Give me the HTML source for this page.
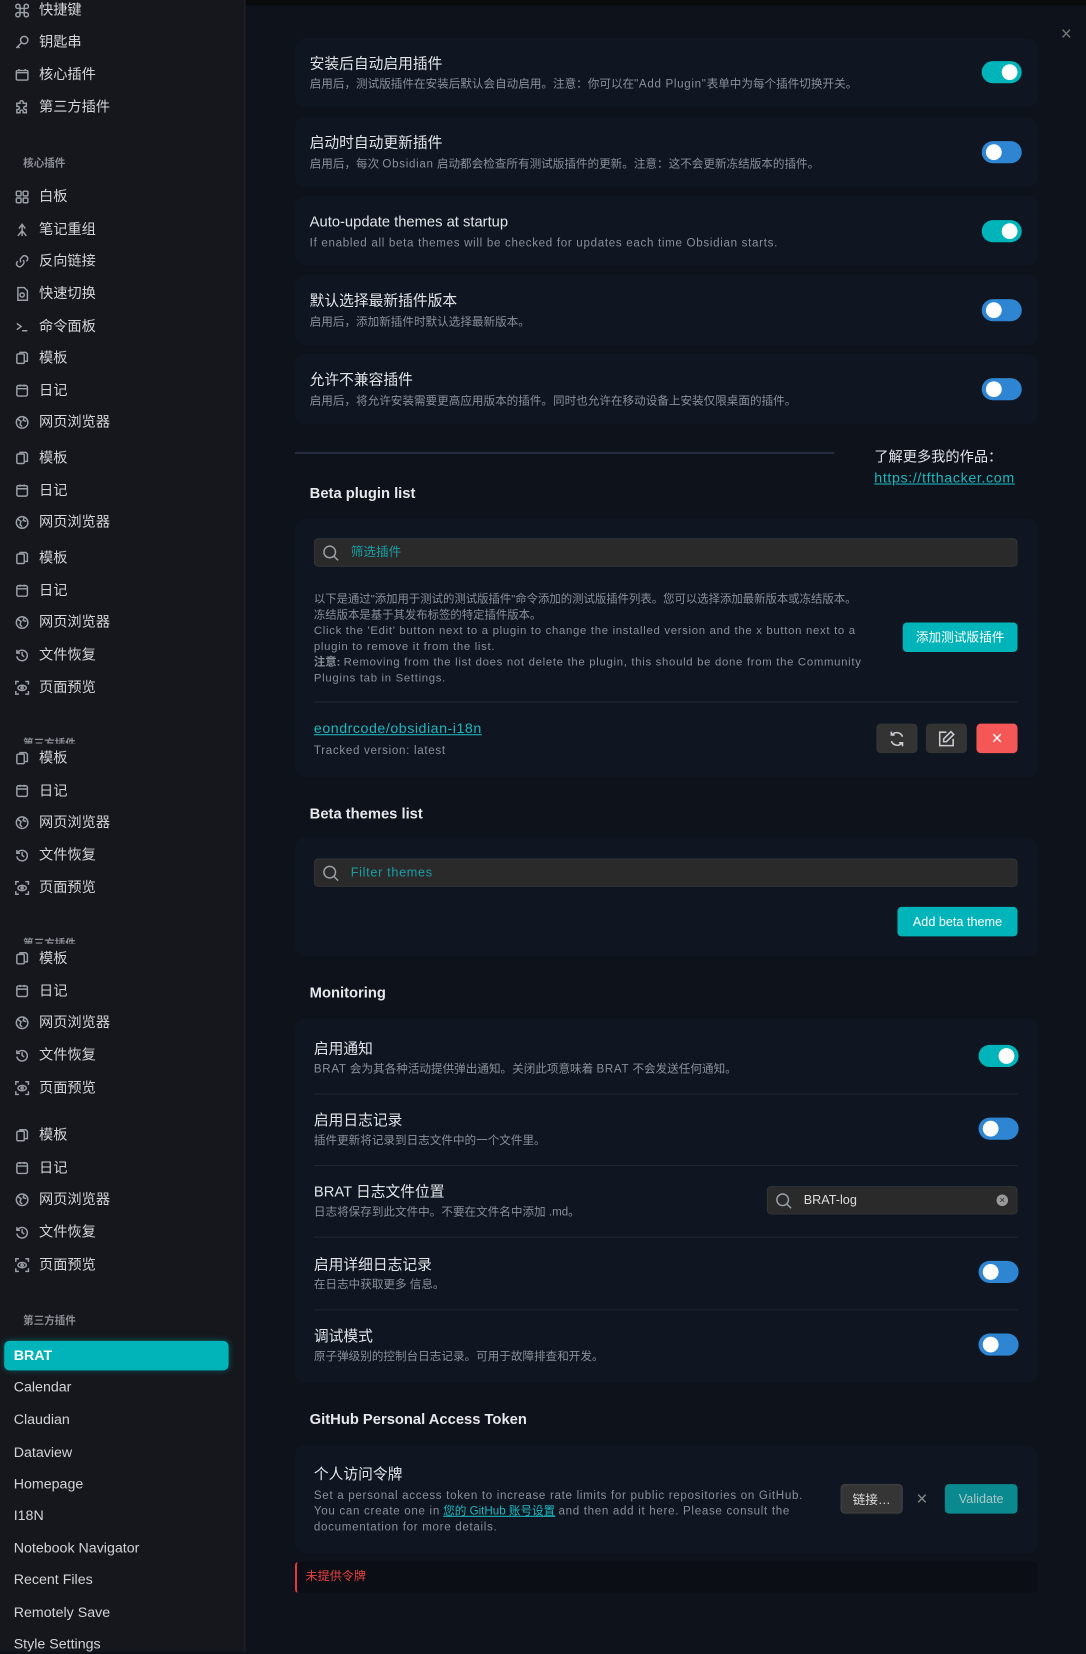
<!DOCTYPE html>
<html><head><meta charset="utf-8"><style>
*{box-sizing:border-box;margin:0;padding:0}
html,body{width:1086px;height:1651px;overflow:hidden;background:#0e121a;font-family:"Liberation Sans","Noto Sans CJK SC",sans-serif}
#w{position:absolute;left:0;top:0;width:1031px;height:1568px;transform:scale(1.05335);transform-origin:0 0;background:#0e121a}
.a{position:absolute}
#sb{position:absolute;left:0;top:0;width:233px;height:1568px;background:#15171c;border-right:1px solid #23262e}
.it{position:absolute;left:14px;height:18px;line-height:18px;font-size:13.5px;color:#d2d4d8;white-space:nowrap}
.it svg{position:absolute;left:0;top:2px;width:14px;height:14px;fill:none;stroke:#9aa0a8;stroke-width:1.4}
.it span{position:absolute;left:23px}
.pl{position:absolute;left:13px;height:18px;line-height:18px;font-size:13.5px;color:#d2d4d8}
.hd{position:absolute;left:22px;font-size:10px;font-weight:bold;color:#8b8f96;height:14px;line-height:14px}
.card{position:absolute;left:280px;width:705px;background:#0f1621;border-radius:10px}
.t{position:absolute;font-size:14px;color:#e2e4e8;white-space:nowrap;line-height:18px}
.d{position:absolute;font-size:11px;color:#8a9099;white-space:nowrap;line-height:15px}
.e{letter-spacing:0.65px}
.tg{position:absolute;width:38px;height:21px;border-radius:11px}
.tg i{position:absolute;top:3px;width:15px;height:15px;border-radius:50%;background:#fff}
.on{background:#00b4ba}.on i{right:4px}
.off{background:#2e86d2}.off i{left:4px}
.h{position:absolute;left:294px;font-size:14px;font-weight:bold;color:#e6e8ec;line-height:18px}
.inp{position:absolute;background:#2a2a2a;border-radius:4px;border:1px solid #333}
.sep{position:absolute;left:298px;width:668px;height:1px;background:#1f2733}
.btn{position:absolute;border-radius:4px;font-size:12px;text-align:center;color:#fff}
</style></head><body><div id="w">
<div class="a" style="left:75px;top:0;width:956px;height:5px;background:#0a0b0d"></div>
<div id="sb">
<svg width="0" height="0" style="position:absolute"><defs>
<symbol id="i1" viewBox="0 0 14 14"><rect x="2" y="2" width="10" height="10" rx="1.5"/><path d="M2 5h10M5 1v2M9 1v2"/></symbol>
<symbol id="i2" viewBox="0 0 14 14"><rect x="2" y="3" width="7" height="9" rx="1"/><path d="M5 3V1.5h5.5L12 3v7h-3"/></symbol>
<symbol id="i3" viewBox="0 0 14 14"><circle cx="7" cy="7" r="5.5"/><path d="M3 4l3 2 -1 3 2 2M9 2l-1 3 3 1"/></symbol>
<symbol id="i4" viewBox="0 0 14 14"><path d="M2.5 5A5 5 0 1 1 2 8"/><path d="M2 2v3h3M7 4v3l2 1.5"/></symbol>
<symbol id="i5" viewBox="0 0 14 14"><path d="M1 4V1h3M10 1h3v3M13 10v3h-3M4 13H1v-3"/><ellipse cx="7" cy="7" rx="4" ry="2.5"/><circle cx="7" cy="7" r="1"/></symbol>
<symbol id="i6" viewBox="0 0 14 14"><rect x="1.5" y="1.5" width="4.5" height="4.5" rx="1"/><rect x="8" y="1.5" width="4.5" height="4.5" rx="1"/><rect x="1.5" y="8" width="4.5" height="4.5" rx="1"/><rect x="8" y="8" width="4.5" height="4.5" rx="1"/></symbol>
<symbol id="i7" viewBox="0 0 14 14"><path d="M7 13V3M4 6l3-4 3 4M7 8l-4 5M7 8l4 5"/></symbol>
<symbol id="i8" viewBox="0 0 14 14"><path d="M6 8a3 3 0 0 1 0-4l2-2a3 3 0 0 1 4 4l-1 1M8 6a3 3 0 0 1 0 4l-2 2a3 3 0 0 1-4-4l1-1"/></symbol>
<symbol id="i9" viewBox="0 0 14 14"><path d="M3 1h6l3 3v9H3z"/><circle cx="7" cy="8" r="2"/></symbol>
<symbol id="i10" viewBox="0 0 14 14"><path d="M2 4l4 3-4 3M7 11h5"/></symbol>
<symbol id="i11" viewBox="0 0 14 14"><path d="M5 5h4v4H5zM5 5V3a2 2 0 1 0-2 2h2M9 5V3a2 2 0 1 1 2 2H9M5 9v2a2 2 0 1 1-2-2h2M9 9v2a2 2 0 1 0 2-2H9"/></symbol>
<symbol id="i12" viewBox="0 0 14 14"><circle cx="9" cy="5" r="3.5"/><path d="M6.5 7.5L1.5 12.5M3 11l1.5 1.5"/></symbol>
<symbol id="i13" viewBox="0 0 14 14"><rect x="1.5" y="3" width="11" height="9" rx="1"/><path d="M1.5 5h11M4 3V1.5M10 3V1.5"/></symbol>
<symbol id="i14" viewBox="0 0 14 14"><path d="M5 2a1.5 1.5 0 0 1 3 0v1h3v3h-1a1.5 1.5 0 0 0 0 3h1v3H8v-1a1.5 1.5 0 0 0-3 0v1H2V9h1a1.5 1.5 0 0 0 0-3H2V3h3z"/></symbol>
</defs></svg>
<div class="it" style="top:1px"><svg><use href="#i11"/></svg><span>快捷键</span></div>
<div class="it" style="top:31px"><svg><use href="#i12"/></svg><span>钥匙串</span></div>
<div class="it" style="top:62px"><svg><use href="#i13"/></svg><span>核心插件</span></div>
<div class="it" style="top:93px"><svg><use href="#i14"/></svg><span>第三方插件</span></div>
<div class="hd" style="top:149px">核心插件</div>
<div class="it" style="top:178px"><svg><use href="#i6"/></svg><span>白板</span></div>
<div class="it" style="top:209px"><svg><use href="#i7"/></svg><span>笔记重组</span></div>
<div class="it" style="top:239px"><svg><use href="#i8"/></svg><span>反向链接</span></div>
<div class="it" style="top:270px"><svg><use href="#i9"/></svg><span>快速切换</span></div>
<div class="it" style="top:301px"><svg><use href="#i10"/></svg><span>命令面板</span></div>
<div class="it" style="top:331px"><svg><use href="#i2"/></svg><span>模板</span></div>
<div class="it" style="top:362px"><svg><use href="#i1"/></svg><span>日记</span></div>
<div class="it" style="top:392px"><svg><use href="#i3"/></svg><span>网页浏览器</span></div>
<div class="it" style="top:426px"><svg><use href="#i2"/></svg><span>模板</span></div>
<div class="it" style="top:457px"><svg><use href="#i1"/></svg><span>日记</span></div>
<div class="it" style="top:487px"><svg><use href="#i3"/></svg><span>网页浏览器</span></div>
<div class="it" style="top:521px"><svg><use href="#i2"/></svg><span>模板</span></div>
<div class="it" style="top:552px"><svg><use href="#i1"/></svg><span>日记</span></div>
<div class="it" style="top:582px"><svg><use href="#i3"/></svg><span>网页浏览器</span></div>
<div class="it" style="top:613px"><svg><use href="#i4"/></svg><span>文件恢复</span></div>
<div class="it" style="top:644px"><svg><use href="#i5"/></svg><span>页面预览</span></div>
<div class="hd" style="top:700px;height:6px;overflow:hidden">第三方插件</div>
<div class="it" style="top:711px"><svg><use href="#i2"/></svg><span>模板</span></div>
<div class="it" style="top:742px"><svg><use href="#i1"/></svg><span>日记</span></div>
<div class="it" style="top:772px"><svg><use href="#i3"/></svg><span>网页浏览器</span></div>
<div class="it" style="top:803px"><svg><use href="#i4"/></svg><span>文件恢复</span></div>
<div class="it" style="top:834px"><svg><use href="#i5"/></svg><span>页面预览</span></div>
<div class="hd" style="top:890px;height:6px;overflow:hidden">第三方插件</div>
<div class="it" style="top:901px"><svg><use href="#i2"/></svg><span>模板</span></div>
<div class="it" style="top:932px"><svg><use href="#i1"/></svg><span>日记</span></div>
<div class="it" style="top:962px"><svg><use href="#i3"/></svg><span>网页浏览器</span></div>
<div class="it" style="top:993px"><svg><use href="#i4"/></svg><span>文件恢复</span></div>
<div class="it" style="top:1024px"><svg><use href="#i5"/></svg><span>页面预览</span></div>
<div class="it" style="top:1069px"><svg><use href="#i2"/></svg><span>模板</span></div>
<div class="it" style="top:1100px"><svg><use href="#i1"/></svg><span>日记</span></div>
<div class="it" style="top:1130px"><svg><use href="#i3"/></svg><span>网页浏览器</span></div>
<div class="it" style="top:1161px"><svg><use href="#i4"/></svg><span>文件恢复</span></div>
<div class="it" style="top:1192px"><svg><use href="#i5"/></svg><span>页面预览</span></div>
<div class="hd" style="top:1248px">第三方插件</div>
<div class="a" style="left:4px;top:1273px;width:213px;height:28px;background:#00b4ba;border-radius:5px;box-shadow:0 0 6px rgba(0,180,186,.4)"></div>
<div class="pl" style="top:1278px;color:#fff;font-weight:bold">BRAT</div>
<div class="pl" style="top:1308px">Calendar</div>
<div class="pl" style="top:1339px">Claudian</div>
<div class="pl" style="top:1370px">Dataview</div>
<div class="pl" style="top:1400px">Homepage</div>
<div class="pl" style="top:1430px">I18N</div>
<div class="pl" style="top:1461px">Notebook Navigator</div>
<div class="pl" style="top:1491px">Recent Files</div>
<div class="pl" style="top:1522px">Remotely Save</div>
<div class="pl" style="top:1552px">Style Settings</div>
</div>

<div class="a" style="left:1007px;top:24px;font-size:18px;color:#777;line-height:16px">×</div>

<div class="card" style="top:36px;height:66px"></div>
<div class="t" style="left:294px;top:51px">安装后自动启用插件</div>
<div class="d" style="left:294px;top:73px">启用后，测试版插件在安装后默认会自动启用。注意：你可以在<span class="e">"Add Plugin"</span>表单中为每个插件切换开关。</div>
<div class="tg on" style="left:932px;top:58px"><i></i></div>

<div class="card" style="top:111px;height:67px"></div>
<div class="t" style="left:294px;top:126px">启动时自动更新插件</div>
<div class="d" style="left:294px;top:149px">启用后，每次 <span class="e">Obsidian</span> 启动都会检查所有测试版插件的更新。注意：这不会更新冻结版本的插件。</div>
<div class="tg off" style="left:932px;top:134px"><i></i></div>

<div class="card" style="top:186px;height:66px"></div>
<div class="t" style="left:294px;top:201px">Auto-update themes at startup</div>
<div class="d e" style="left:294px;top:224px">If enabled all beta themes will be checked for updates each time Obsidian starts.</div>
<div class="tg on" style="left:932px;top:209px"><i></i></div>

<div class="card" style="top:261px;height:67px"></div>
<div class="t" style="left:294px;top:276px">默认选择最新插件版本</div>
<div class="d" style="left:294px;top:299px">启用后，添加新插件时默认选择最新版本。</div>
<div class="tg off" style="left:932px;top:284px"><i></i></div>

<div class="card" style="top:336px;height:67px"></div>
<div class="t" style="left:294px;top:351px">允许不兼容插件</div>
<div class="d" style="left:294px;top:374px">启用后，将允许安装需要更高应用版本的插件。同时也允许在移动设备上安装仅限桌面的插件。</div>
<div class="tg off" style="left:932px;top:359px"><i></i></div>

<div class="a" style="left:280px;top:429px;width:512px;height:2px;background:#272c40"></div>
<div class="t" style="left:830px;top:425px;font-size:13.5px">了解更多我的作品：</div>
<div class="t" style="left:830px;top:445px;font-size:13.5px;color:#1fb8c0;text-decoration:underline;letter-spacing:0.6px">https://tfthacker.com</div>

<div class="h" style="top:459px">Beta plugin list</div>
<div class="card" style="top:492px;height:246px"></div>
<div class="inp" style="left:298px;top:511px;width:668px;height:27px"></div>
<svg class="a" style="left:306px;top:517px" width="16" height="16" viewBox="0 0 16 16" fill="none" stroke="#9aa0a8" stroke-width="1.4"><circle cx="7" cy="7" r="5.5"/><path d="M11 11l4 4"/></svg>
<div class="d" style="left:333px;top:516px;font-size:12px;color:#1a9ea6;line-height:17px">筛选插件</div>
<div class="d" style="left:298px;top:562px;line-height:15px;font-size:10.8px">以下是通过"添加用于测试的测试版插件"命令添加的测试版插件列表。您可以选择添加最新版本或冻结版本。<br>冻结版本是基于其发布标签的特定插件版本。<br><span class="e">Click the 'Edit' button next to a plugin to change the installed version and the x button next to a</span><br><span class="e">plugin to remove it from the list.</span><br><b>注意:</b> <span class="e">Removing from the list does not delete the plugin, this should be done from the Community</span><br><span class="e">Plugins tab in Settings.</span></div>
<div class="btn" style="left:857px;top:591px;width:109px;height:28px;line-height:28px;background:#00b4ba">添加测试版插件</div>
<div class="sep" style="top:666px"></div>
<div class="t" style="left:298px;top:683px;font-size:13.5px;color:#1fb8c0;text-decoration:underline;letter-spacing:0.5px">eondrcode/obsidian-i18n</div>
<div class="d e" style="left:298px;top:706px">Tracked version: latest</div>
<div class="btn" style="left:832px;top:687px;width:39px;height:28px;background:#333"></div>
<svg class="a" style="left:843px;top:693px" width="17" height="17" viewBox="0 0 16 16" fill="none" stroke="#c8ccd2" stroke-width="1.4"><path d="M13 6A5.5 5.5 0 0 0 3.5 4.5M3 10a5.5 5.5 0 0 0 9.5 1.5M3 1.5v3h3M13 14.5v-3h-3"/></svg>
<div class="btn" style="left:879px;top:687px;width:39px;height:28px;background:#333"></div>
<svg class="a" style="left:890px;top:693px" width="17" height="17" viewBox="0 0 16 16" fill="none" stroke="#c8ccd2" stroke-width="1.4"><path d="M8 2H2v12h12V8"/><path d="M12 1.5l2.5 2.5L8 10.5H5.5V8z"/></svg>
<div class="btn" style="left:927px;top:687px;width:39px;height:28px;background:#f55656;font-size:18px;line-height:28px">×</div>

<div class="h" style="top:763px">Beta themes list</div>
<div class="card" style="top:795px;height:113px"></div>
<div class="inp" style="left:298px;top:815px;width:668px;height:27px"></div>
<svg class="a" style="left:306px;top:821px" width="16" height="16" viewBox="0 0 16 16" fill="none" stroke="#9aa0a8" stroke-width="1.4"><circle cx="7" cy="7" r="5.5"/><path d="M11 11l4 4"/></svg>
<div class="d e" style="left:333px;top:820px;font-size:12px;color:#1a9ea6;line-height:17px">Filter themes</div>
<div class="btn" style="left:852px;top:861px;width:114px;height:28px;line-height:28px;background:#00b4ba">Add beta theme</div>

<div class="h" style="top:933px">Monitoring</div>
<div class="card" style="top:967px;height:346px"></div>
<div class="t" style="left:298px;top:986px">启用通知</div>
<div class="d" style="left:298px;top:1008px"><span class="e">BRAT</span> 会为其各种活动提供弹出通知。关闭此项意味着 <span class="e">BRAT</span> 不会发送任何通知。</div>
<div class="tg on" style="left:929px;top:992px"><i></i></div>
<div class="sep" style="top:1038px"></div>
<div class="t" style="left:298px;top:1054px">启用日志记录</div>
<div class="d" style="left:298px;top:1076px">插件更新将记录到日志文件中的一个文件里。</div>
<div class="tg off" style="left:929px;top:1061px"><i></i></div>
<div class="sep" style="top:1106px"></div>
<div class="t" style="left:298px;top:1122px">BRAT 日志文件位置</div>
<div class="d" style="left:298px;top:1144px">日志将保存到此文件中。不要在文件名中添加 .md。</div>
<div class="inp" style="left:728px;top:1126px;width:238px;height:27px"></div>
<svg class="a" style="left:736px;top:1132px" width="16" height="16" viewBox="0 0 16 16" fill="none" stroke="#9aa0a8" stroke-width="1.4"><circle cx="7" cy="7" r="5.5"/><path d="M11 11l4 4"/></svg>
<div class="d" style="left:763px;top:1131px;font-size:12px;color:#dcdcdc;line-height:17px">BRAT-log</div>
<div class="a" style="left:946px;top:1134px;width:11px;height:11px;border-radius:50%;background:#999;color:#222;font-size:9px;line-height:11px;text-align:center">×</div>
<div class="sep" style="top:1174px"></div>
<div class="t" style="left:298px;top:1191px">启用详细日志记录</div>
<div class="d" style="left:298px;top:1213px">在日志中获取更多 信息。</div>
<div class="tg off" style="left:929px;top:1197px"><i></i></div>
<div class="sep" style="top:1243px"></div>
<div class="t" style="left:298px;top:1259px">调试模式</div>
<div class="d" style="left:298px;top:1281px">原子弹级别的控制台日志记录。可用于故障排查和开发。</div>
<div class="tg off" style="left:929px;top:1266px"><i></i></div>

<div class="h" style="top:1338px">GitHub Personal Access Token</div>
<div class="card" style="top:1372px;height:103px"></div>
<div class="t" style="left:298px;top:1390px">个人访问令牌</div>
<div class="d" style="left:298px;top:1413px"><span class="e">Set a personal access token to increase rate limits for public repositories on GitHub.</span><br><span class="e">You can create one in</span> <span style="color:#1fb8c0;text-decoration:underline">您的 GitHub 账号设置</span> <span class="e">and then add it here. Please consult the</span><br><span class="e">documentation for more details.</span></div>
<div class="btn" style="left:798px;top:1409px;width:59px;height:28px;line-height:28px;background:#353535;border:1px solid #444;color:#ddd">链接…</div>
<div class="a" style="left:870px;top:1413px;font-size:18px;color:#888;line-height:20px">×</div>
<div class="btn" style="left:897px;top:1409px;width:69px;height:28px;line-height:28px;background:#0a8a8f;color:#a9c6c8">Validate</div>

<div class="a" style="left:280px;top:1483px;width:705px;height:29px;background:#0b0e15;border-left:2px solid #e03a3a;border-radius:3px"></div>
<div class="d" style="left:290px;top:1490px;color:#e84040;font-size:11.5px">未提供令牌</div>
</div></body></html>
